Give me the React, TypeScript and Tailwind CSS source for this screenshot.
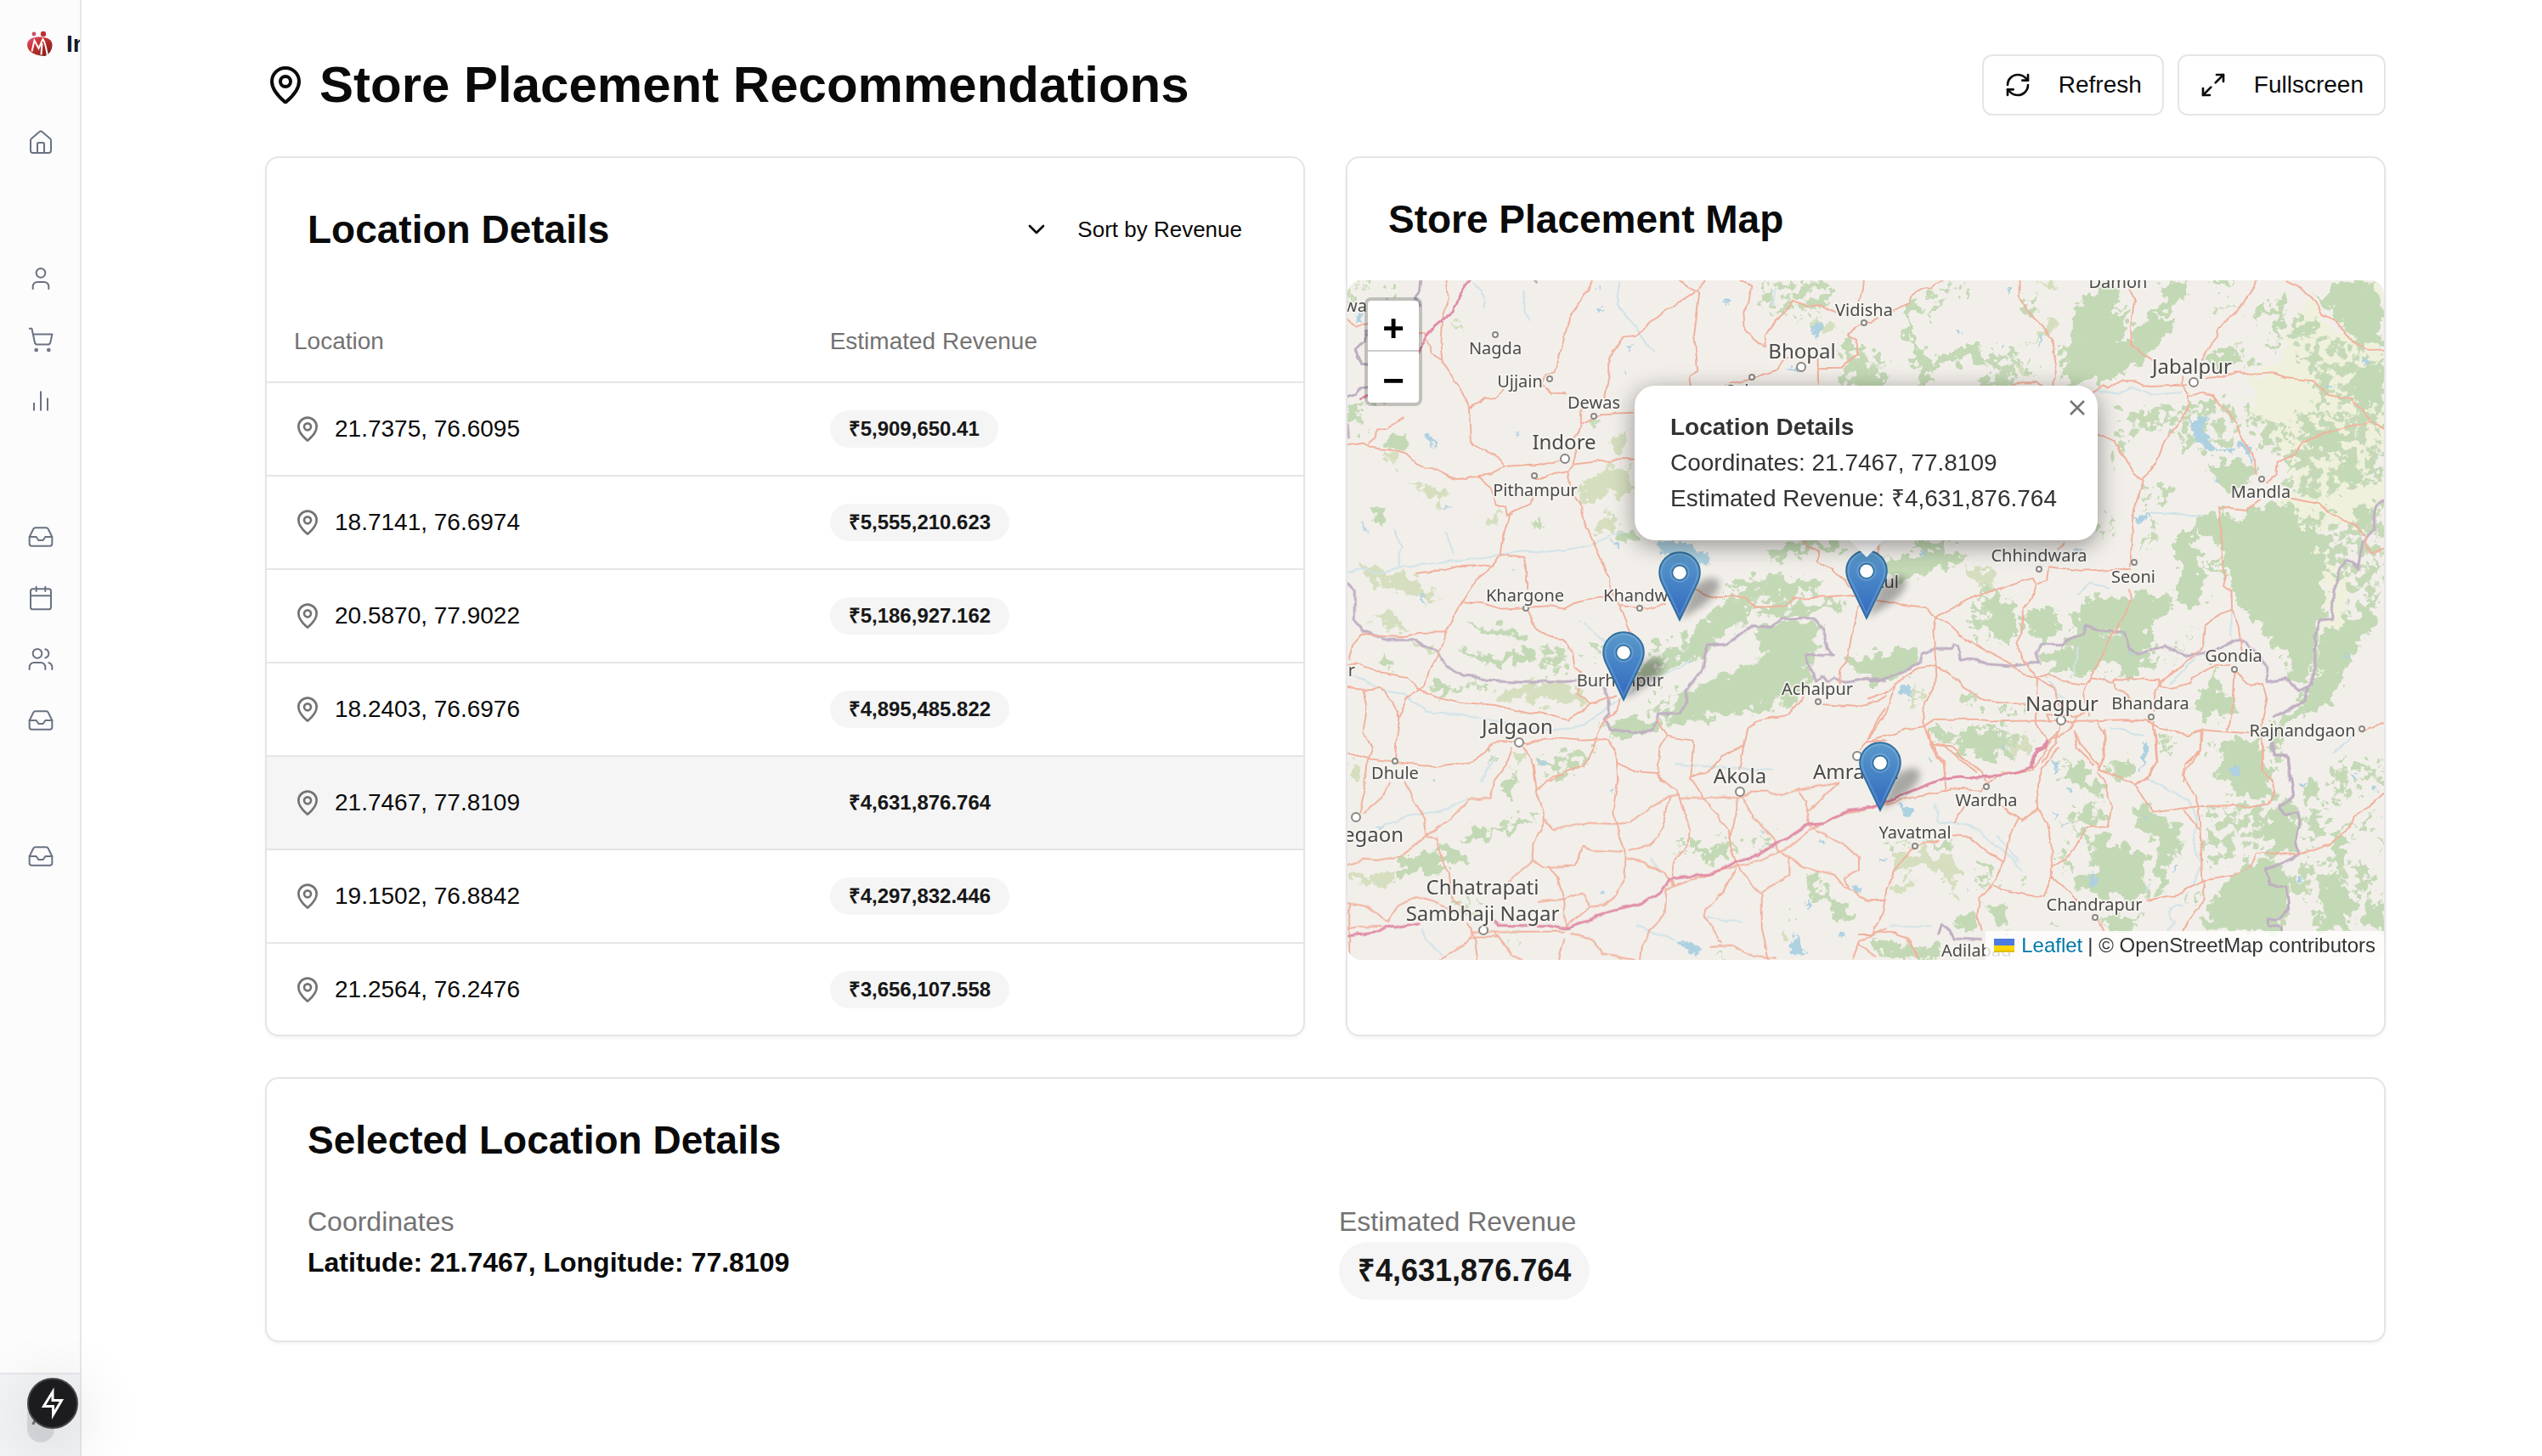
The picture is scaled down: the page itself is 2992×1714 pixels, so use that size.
import React from "react";
import {
  Calendar,
  ChevronDown,
  House,
  Inbox,
  MapPin,
  Maximize2,
  RefreshCw,
  ShoppingCart,
  User,
  Users,
} from "lucide-react";

type Sheet = {
  transform: string;
  meadow?: string;
  forest: string;
  scrub: string;
  light: string;
  water: string;
  rivers: string;
  roads: string;
  motorways: string;
  borders: string;
};

const SHEETS: Sheet[] = [
  {
    transform: "translate(-6 -290) scale(0.408 0.3333)",
    forest: "M1450 1140L1500 1150 1530 1210 1568 1200 1568 1250 1470 1250 1480 1200ZM1440 1085L1475 1090 1480 1120 1450 1130Z",
    scrub: "M1205 900L1300 880 1400 870 1410 950 1340 1000 1210 970ZM1430 1120L1568 1150 1568 1250 1450 1250ZM15 870L80 870 60 930 20 950ZM130 870L160 870 150 940 130 930ZM80 1300L130 1300 130 1320 80 1320Z",
    light: "M1370 1010L1430 1020 1440 1060 1400 1040 1360 1060ZM310 1010L335 1020 330 1050ZM1350 950L1390 960 1380 1000Z",
    water: "M1360 1010L1390 1025 1370 1080 1350 1045ZM735 965L755 975 740 985ZM820 1090L838 1105 828 1115ZM1100 935L1115 935 1108 955ZM1275 1180L1315 1175 1310 1195ZM40 990L60 985 55 1025 38 1020ZM810 1180L822 1200 815 1205ZM740 890L746 900 738 905Z",
    rivers: "M380 880L410 930 405 970M520 910L525 980 540 1010M800 880L790 950 830 1010 870 1080 900 1120M1250 900L1240 960",
    roads: "M300 870L306 930 287 1015 283 1090 288 1155 325 1220 345 1265 367 1320M718 870L715 890 695 930 655 1000 635 1100 612 1195 585 1200 575 1240 600 1268 645 1270M1048 870L1020 908 925 985 905 1005 845 1065 810 1070 770 1145 770 1200 757 1290M975 870L1015 908 1030 915 1015 1060 1025 1190 1003 1210 1007 1240M1150 870L1180 890 1172 950 1155 985 1158 1030 1185 1080 1225 1108M1502 870L1500 905 1488 945M1225 1108L1222 1070 1250 1010 1275 985 1300 942 1340 960 1380 958 1420 985M1285 1140L1255 1185 1160 1225 1105 1240M1374 1145L1375 1240M1374 1180L1440 1178 1485 1130 1485 1080 1458 1060 1490 1030 1525 1020M367 1320L400 1300 415 1285 445 1280 465 1255M220 1055L240 1060 258 1130 285 1150M15 1005L40 1035 70 1020",
    motorways: "M368 870L345 910 318 980 265 1035 245 1070 220 1125M72 1280L55 1286",
    borders: "M225 870L222 910 210 930 222 960M70 1045L65 1080 40 1110 40 1140 55 1165 72 1168M15 1280L40 1270 50 1250 72 1248M555 870L560 880",
  },
  {
    transform: "translate(614 -290) scale(0.408 0.3333)",
    meadow: "M1245 980L1260 935 1300 1000 1400 1090 1485 1120 1485 1320 1100 1320 1110 1220 1190 1150 1210 1050ZM1430 870L1485 870 1485 960Z",
    forest: "M590 960L640 920 650 900 700 900 730 940 700 1000 760 960 740 1060 700 1110 630 1080 570 1110ZM560 1100L620 1080 780 1090 800 1150 700 1225 560 1245ZM765 1020L850 950 840 880 910 870 930 920 870 960 830 1000 890 1020 860 1080 800 1130 760 1080ZM115 930L140 925 115 1020 130 1100 190 1160 175 1243 140 1243 150 1180 100 1080ZM180 1150L250 1110 310 1090 330 1180 280 1150 190 1170ZM1090 990L1200 930 1195 1070 1170 1070 1165 980 1110 1015ZM1305 930L1350 880 1410 870 1450 900 1485 960 1485 1110 1420 1100 1350 1010ZM1405 1190L1485 1130 1485 1320 1430 1320 1390 1230ZM980 1140L1040 1110 1080 1150 1000 1185ZM985 870L1060 870 1040 895 985 890ZM300 1230L420 1190 400 1243 300 1243ZM960 1300L1010 1285 1000 1320 950 1320ZM1215 1010L1290 1010 1300 1060 1230 1060Z",
    scrub: "M190 890L235 875 200 960 170 1010 160 960ZM0 1100L40 1120 30 1230 0 1240ZM330 1120L430 1130 480 1200 380 1240ZM440 960L510 890 480 990ZM1150 1080L1190 1070 1170 1130ZM260 900L290 900 280 950ZM1230 1060L1400 1080 1485 1200 1485 1320 1300 1320 1280 1260ZM990 960L1060 940 1000 1000ZM1050 1120L1130 1160 1110 1190Z",
    light: "M480 870L545 870 500 910ZM510 1000L550 1000 520 1060 440 1110 500 1050ZM1060 1090L1085 1100 1070 1125ZM420 1170L460 1180 450 1215Z",
    water: "M1420 1140L1437 1150 1430 1175ZM395 900L410 900 400 925ZM490 1070L498 1070 495 1120ZM245 1045L262 1045 255 1060ZM1010 915L1018 918 1008 928ZM1320 1235L1338 1245 1325 1260ZM380 1090L390 1095 380 1105Z",
    rivers: "M660 1260L720 1270 760 1245 820 1275 900 1265",
    roads: "M215 870L195 880 180 898 150 900 120 925 118 950 70 975M25 1000L5 1020M433 870L433 925 460 985 510 1045 532 1095 533 1130 540 1175 532 1243M750 900L765 935 755 1030 757 1095 780 1120 815 1150M1115 870L1110 900 1070 965 1010 1035 1007 1070 985 1100 960 1155M1205 870L1245 895 1285 945 1305 990 1345 1010 1365 1045 1395 1085 1440 1115 1485 1115M970 1215L1030 1210 1070 1195 1120 1202 1160 1198 1200 1215 1280 1225 1325 1275 1390 1290 1415 1320M920 1240L810 1245 770 1225 725 1225 690 1250 680 1240 645 1265M905 1210L905 1240 922 1270 920 1320M925 1280L960 1265 990 1275 1020 1320M412 1243L440 1228 480 1228 500 1243",
    motorways: "",
    borders: "",
  },
  {
    transform: "translate(-6 150) scale(0.408 0.3333)",
    forest: "M990 790L1070 730 1110 680 1180 690 1160 760 1060 840 1050 870 990 850ZM870 890L950 870 1040 850 1030 890 950 910 880 940ZM980 1000L1110 940 1160 920 1230 860 1170 790 1280 755 1370 770 1370 860 1340 900 1350 960 1290 1050 1200 1060 1000 1110 920 1110 960 1040ZM1100 620L1220 600 1380 595 1390 640 1290 665 1200 660ZM1190 690L1300 700 1460 680 1440 710 1320 730 1220 730ZM350 760L420 770 510 790 510 825 430 810ZM330 850L420 878 560 860 570 895 400 908ZM240 970L320 970 310 1010 260 1005ZM750 1120L840 1100 910 1090 900 1150 790 1155ZM1225 530L1300 475 1440 480 1440 510 1370 500 1250 545ZM1450 880L1568 885 1568 930 1480 940ZM85 350L130 350 120 425 90 400ZM560 370L576 370 568 430 560 400ZM140 75L180 80 175 145 120 130ZM800 430L840 430 840 475 800 470ZM95 885L140 875 140 910 110 910ZM20 20L50 10 40 50 20 60ZM720 50L740 50 730 80Z",
    scrub: "M580 830L640 850 650 930 560 950ZM860 920L930 910 900 980 850 960ZM1110 650L1300 620 1300 700 1120 700ZM900 800L1000 850 900 890ZM340 960L420 970 400 1000 340 990ZM880 1030L960 1030 920 1080ZM730 850L780 840 760 880 670 860ZM560 1240L700 1250 620 1320ZM410 1200L440 1220 430 1280ZM15 0L60 0 60 60 20 70ZM480 1280L520 1280 500 1320Z",
    light: "M680 290L730 240 830 190 840 290 760 320 700 340ZM740 370L790 370 780 450 728 430ZM200 260L290 290 290 340 220 290ZM60 560L200 600 290 680 180 660 70 610ZM80 740L160 730 200 790 150 780ZM440 1000L570 965 680 1000 680 1040 450 1030ZM120 160L160 170 150 210 130 200ZM410 370L460 380 440 420 415 410ZM770 100L830 80 800 160 770 150ZM190 820L270 850 240 870Z M15 1260L60 1270 60 1310 20 1300Z",
    water: "M905 475L1015 475 1015 508 1060 515 1058 555 1020 545 950 520 920 510ZM235 100L250 85 262 110 275 135 262 138 250 115ZM500 88L510 90 505 105ZM295 350L318 345 300 368ZM50 400L68 430 62 432ZM220 655L235 660 238 700ZM565 1245L585 1240 575 1268ZM770 470L800 480 800 500ZM490 570L498 575 492 583ZM685 750L692 755 688 762Z",
    rivers: "M15 580L60 570 110 585 180 560 350 540 450 520 530 505 600 510 700 490 760 460 810 435M15 940L60 960 120 1000 180 1010 240 1070 340 1085 460 1110 600 1140 700 1120 760 1060 870 980 960 920 1010 890M150 430L170 490 160 560M300 440L320 520M60 400L75 440M700 760L760 830M1060 300L1100 350",
    roads: "M15 130L60 122 80 140 155 152 185 165 215 200 260 215 300 240 355 255 390 240 430 235 470 208 540 200 560 205 610 192 640 180M75 125L95 105 98 80 130 75 175 38M365 0L370 120 395 145 440 165 470 208M690 0L688 50 690 70 668 105 675 150 665 200 650 225 610 235 590 245 555 250M690 60L745 25 840 20M665 200L770 185 840 182M650 228L662 300 690 350 690 385 720 460 740 520 770 605 770 630 800 700 835 800M547 315L540 340 485 370 475 420 462 455 455 520 430 565 385 610 345 685 320 740 300 790 285 840 275 880 248 930 235 985 185 1025 165 1100 155 1180 152 1245M390 240L430 280 440 340 468 350 472 380 490 375M455 518L490 525 525 530 532 560 532 640M210 585L300 572 340 558 385 556 425 562M345 685L400 690 460 710 600 700 640 710 670 690 740 668 770 668M535 720L555 775 605 815 640 820 665 870 670 920 690 940 680 1010 715 1045 745 1035 790 1015M300 793L220 795 170 810 85 805 55 800 30 835 20 890M15 905L50 905 100 935 190 955 215 990 270 1020 340 1040 440 1050 540 1080 570 1075 650 1100 690 1070 715 1045M15 990L60 995 110 990 145 1040 165 1100M60 995L70 1060 60 1150 85 1200 70 1250 65 1320M805 700L880 710 930 695M1020 645L1070 668 1160 670 1190 705 1280 700 1300 675 1400 670 1480 662M1330 470L1345 495 1370 500 1370 545 1415 570 1450 610 1465 640M1490 700L1475 770 1455 900 1440 920 1435 985M15 1220L75 1240 155 1250 260 1270 370 1255 410 1220 435 1180 490 1180 530 1190 590 1165 690 1175 765 1170 790 1215 795 1320M800 1030L795 1070 760 1100 735 1150 725 1200 700 1260 640 1290 600 1320M490 1205L470 1260 435 1320M520 1200L545 1240 555 1320M905 1100L935 1160 915 1200 910 1295M935 1160L1010 1175 1015 1190 1005 1310M795 1255L850 1285 905 1290 930 1320M1330 1025L1290 1085 1210 1100 1170 1135 1155 1210 1145 1280M1155 1195L1100 1225 1060 1280 1010 1305M1385 1048L1480 1055 1540 1040 1568 1020M1568 1060L1510 1180 1490 1210M1510 1180L1568 1178M1547 475L1545 500",
    motorways: "",
    borders: "M15 620L35 645 35 750 60 790 130 820 200 820 275 860 300 915 350 945 390 950 420 965 530 970 680 962M755 990L770 1040 770 1080 755 1100 775 1135 860 1150 895 1135 915 1080 970 1078 995 1040 990 1000 1040 920 1045 880 1055 840 1105 835 1180 770 1240 775 1270 745 1360 742 1385 780 1400 850 1415 870 1390 875 1340 870 1345 910 1370 970 1385 945 1400 970 1420 955 1450 970 1480 965 1510 955 1568 965M15 60L18 105",
  },
  {
    transform: "translate(614 150) scale(0.408 0.3333)",
    meadow: "M1080 0L1485 0 1485 120 1450 170 1450 220 1485 270 1485 330 1440 450 1340 400 1290 440 1350 560 1380 620 1370 780 1310 770 1330 640 1290 560 1270 440 1180 330 1230 300 1220 200 1150 100ZM1070 450L1130 450 1140 490 1110 520 1070 490Z",
    forest: "M985 370L1030 370 1040 395 1100 370 1150 340 1220 345 1260 400 1290 440 1300 520 1330 570 1300 620 1325 680 1290 760 1290 850 1300 900 1250 985 1215 960 1210 900 1150 830 1130 760 1080 720 1040 640 1030 560 1010 480 960 440ZM870 490L950 390 1000 370 1005 410 950 440 940 520 965 600 965 690 890 695 890 530ZM965 560L1010 520 1020 590ZM460 720L540 700 550 790 500 825 440 760ZM580 740L640 660 720 680 780 650 880 680 870 720 800 760 820 840 760 860 720 790 610 800ZM490 870L560 840 620 790 730 800 780 870 840 870 830 900 740 950 700 900 590 945 510 910ZM1400 760L1475 620 1460 760 1400 860 1370 930 1340 1060 1270 1070 1230 1110 1170 1110 1250 1040 1300 900 1300 790ZM0 880L130 850 150 900 60 960 0 960ZM0 560L150 510 290 515 230 560 120 600 60 610ZM930 1060L1000 930 1020 1010 1060 1040 1030 1090 970 1090ZM1020 1180L1130 1160 1150 1300 1010 1320ZM1060 310L1010 270 980 200 1060 180 1120 240ZM330 690L420 670 430 800 370 820ZM1390 350L1450 340 1450 440 1400 400ZM180 1110L210 1120 220 1170 180 1160ZM1370 180L1410 170 1400 260 1370 240ZM120 480L230 475 220 520 150 510ZM1240 110L1320 60 1400 100 1330 170ZM250 1140L370 1130 410 1210 330 1240 260 1190ZM560 1260L630 1270 620 1320 560 1320ZM690 1250L760 1240 750 1320Z",
    scrub: "M740 0L900 0 880 80 760 90 700 210 670 200 720 120ZM880 0L1080 0 1040 130 900 150ZM1220 20L1480 0 1480 250 1300 330 1200 300ZM1090 20L1200 60 1200 160 1120 130ZM1250 360L1400 420 1480 340 1480 640 1400 640 1300 560ZM1380 560L1480 500 1460 640 1390 760ZM690 380L720 380 680 470 670 430ZM760 300L880 270 860 330 780 330ZM830 390L830 470 780 500ZM320 620L400 660 350 820 290 780ZM850 890L950 770 890 860ZM1150 1140L1200 1120 1200 1260 1150 1240ZM820 1160L890 1180 850 1230ZM260 990L310 1000 310 1060 270 1040ZM370 1050L450 1080 400 1110ZM1370 640L1430 720 1430 820 1380 800ZM980 0L1080 20 1060 110ZM1340 1250L1485 1260 1485 1320 1340 1320Z",
    light: "M260 560L360 570 370 620 300 650 320 610ZM130 980L160 1000 140 1050ZM400 1180L460 1150 470 1200 420 1240Z",
    water: "M925 45L980 30 965 80 1000 150 1060 140 1070 110 1100 140 1110 210 1090 150 1060 130 1050 158 980 150 940 110ZM760 385L810 375 800 395 780 410ZM150 510L165 510 155 540ZM90 980L125 975 120 1030 90 1010ZM750 850L760 860 755 890ZM590 500L615 505 600 515ZM990 240L1015 265 1005 265ZM1370 870L1380 875 1375 890ZM160 1235L190 1245 180 1255ZM380 1200L395 1190 385 1215ZM1040 1270L1070 1265 1050 1305ZM1390 1290L1405 1290 1400 1320ZM790 1180L812 1190 800 1240 780 1290 790 1230ZM1220 290L1232 295 1225 305ZM615 770L627 770 620 790ZM680 950L690 955 682 962Z",
    rivers: "M970 830L930 900 870 970M1045 720L1045 800M790 1160L740 1140 700 1130M600 660L640 620 690 640M800 370L880 375 960 380M1400 1150L1340 1220M600 850L590 940M520 970L560 1030",
    roads: "M920 0L890 60 850 120 830 190 790 250 780 300 765 360 760 430 755 520 755 560M750 640L755 680 740 730 700 800 670 880 635 960 620 1000 622 1035 635 1090M660 95L705 120 745 180 750 215 790 260M1025 0L1060 60 1075 110 1105 160 1120 230M1145 265L1175 240 1178 190 1230 160 1250 125 1310 90 1445 52 1485 75M1420 0L1445 45M1215 320L1300 340 1330 370 1400 415 1430 450 1435 495 1450 518 1485 495M1130 325L1090 360 1010 350 1018 470 1020 560 1028 600 1022 630 1045 650 1047 710 1065 770 1075 860M1047 710L1010 725 970 770 965 840 925 890 835 975 825 1000 822 1070M755 570L700 570 610 575 520 562 515 610 480 628 470 602 395 630 300 670 190 738 185 790 193 910 195 960 160 1040 155 1110 175 1180 215 1250 222 1310M565 473L545 500M480 628L470 670 445 710 447 780 425 830 440 880 485 960 480 1110M25 680L80 692 160 705 190 738 225 760 260 800 340 860 410 905 440 940 490 960 540 1000 550 1070M0 1030L60 1000 100 950 140 920 193 910 230 935 270 985 335 1035 400 1040 450 1050M75 990L50 1080 0 1165M0 1180L110 1135 160 1125 195 1100 310 1100 370 1108 480 1105 550 1108 650 1105 740 1102 800 1105 840 1130 920 1155 960 1138 1095 1150M480 955L520 940 560 965 630 975 640 955 700 968 710 958 835 960 840 985 870 990 930 972 930 955 980 920 1040 908M705 965L710 990 735 1000 760 1040M1055 930L1050 1060 1035 1140M1060 935L1100 980 1135 975 1148 1030 1135 1100 1133 1150 1133 1280M960 1145L955 1215 910 1280 905 1320M820 1110L830 1250 805 1310M660 1108L680 1160 680 1220 662 1280M600 1090L575 1140 520 1175M480 1110L500 1150 515 1170M590 1140L600 1200 650 1260M550 1120L540 1180 500 1250M175 1190L220 1195 270 1250 310 1290M1425 1142L1455 1130 1485 1112M28 475L28 520M520 1110L510 1080 600 1090 640 1070",
    motorways: "M518 1180L510 1200 480 1215 470 1270",
    borders: "M0 962L30 965 100 930 150 895 155 870 190 850 235 850 245 835 260 840 265 895 305 885 340 905 410 912 490 900 480 865 500 835 560 835 600 805 620 800 625 768 660 785 735 790 750 850 780 870 850 840 920 880 1010 850 1050 820 1090 830 1145 910 1150 965 1200 955 1240 1000 1265 985M1485 325L1460 350 1460 430 1425 470 1415 530 1410 570 1395 545 1375 535 1360 570 1340 650 1335 745 1300 750 1285 800 1290 920 1265 990 1260 1030 1220 1060 1170 1090M1165 1180L1170 1225 1210 1235 1212 1320",
  },
  {
    transform: "translate(-6 530) scale(0.408 0.3333)",
    forest: "M150 490L180 450 260 430 320 415 350 420 370 480 330 475 300 455 270 470 290 500 260 510 230 480 160 520ZM340 390L380 350 450 350 510 295 570 310 520 330 470 350 420 370 350 400ZM990 420L1040 400 1060 430 1100 380 1110 420 1080 490 1050 450ZM1330 510L1370 515 1380 560 1410 600 1430 600 1470 640 1435 668 1400 620 1370 600 1330 550ZM445 220L480 170 510 150 480 230ZM1540 740L1568 730 1568 780 1540 770ZM1090 800L1115 800 1115 809 1090 809Z",
    scrub: "M1090 370L1140 380 1130 430 1100 420ZM1160 390L1245 370 1240 420 1180 410ZM300 590L400 600 420 650 340 640ZM600 80L740 60 700 120 620 130ZM950 420L1020 410 1040 450ZM1290 660L1320 650 1310 670Z",
    light: "M20 500L60 490 90 515 140 500 150 530 130 570 90 540 30 540ZM500 80L525 80 520 125 502 120ZM1265 710L1290 700 1280 740ZM500 720L525 720 510 740Z",
    water: "M965 745L1000 745 1040 770 1020 800 990 770ZM1290 770L1310 710 1325 760 1340 790 1300 795ZM745 550L765 580 750 585ZM1465 540L1498 555 1485 572ZM1340 605L1350 605 1346 635ZM90 340L120 335 110 350ZM570 95L590 105 575 125ZM1205 350L1215 355 1213 375ZM1435 715L1450 720 1438 740ZM1375 390L1395 388 1385 400ZM775 205L783 205 780 225ZM260 178L272 182 264 192ZM335 770L340 775 335 783ZM475 738L482 742 478 748Z",
    rivers: "M110 340L180 305 290 280 360 240M440 90L400 180M890 450L920 500M1050 660L1150 680M230 700L240 740 290 790M850 690L960 740M960 120L1240 140",
    roads: "M180 185L205 250 235 310 245 375 270 380 285 450 308 500 315 590 360 640M135 185L110 240 60 295M70 180L50 290M435 180L430 238 365 245 300 325 245 370 165 445 100 458 60 455 15 475M550 120L560 210 580 300 580 330 550 400 548 460 580 482 670 478 695 410 720 422 805 428M830 425L890 400 915 370 945 235M560 210L610 160 640 155M585 315L610 352 690 325 780 330 830 325 870 290 940 235 965 230M795 170L780 290 800 370 815 430 812 530 790 580 750 615 715 620M820 450L870 465 930 505 955 550 935 560 930 650 890 700 865 760 860 809M910 155L965 210 970 240 1050 240 1100 235 1145 238 1180 215 1225 215 1270 228 1310 210 1430 185M1005 170L1040 235 1075 290 1115 355 1120 410 1135 465 1155 500 1185 550 1210 580 1210 700 1230 809M1140 240L1130 330 1115 380M1155 240L1190 310 1245 380 1255 420 1330 480 1420 510 1450 555 1520 600 1568 595M970 240L1005 350 990 420 960 450 950 530 955 550 1000 530 1140 480 1200 460 1290 410 1350 350 1450 290 1540 270M1315 215L1335 250 1350 340 1445 400 1490 450 1490 490 1450 520 1460 555M1430 185L1385 240 1345 285M1290 450L1290 510 1210 570M1135 490L1100 570 1050 630 1045 655 1095 750M1060 765L1120 758 1185 795 1250 803M548 460L480 530M600 485L620 520 640 600 645 700M15 610L70 620 130 675 160 620 215 585 260 600 315 640 350 660M360 680L375 720 345 760 285 809M380 720L390 809M375 712L440 712 540 710 640 710M370 730L445 730M440 715L490 795 520 809M660 715L720 740 750 790 840 809M640 735L625 809M645 690L715 620 690 575 640 595 565 605M15 700L60 690 110 690M20 610L20 809M1470 809L1490 745 1540 715 1568 700M1490 755L1535 795",
    motorways: "M15 723L100 710 125 693 150 695 220 680M440 675L450 688 590 688 625 698 655 697 680 680 720 670 760 640 830 620 880 602 920 570 945 525 1065 505 1100 490 1135 465 1195 443 1250 400 1280 385 1345 333 1390 328 1460 280 1530 270 1568 250",
    borders: "",
  },
  {
    transform: "translate(614 530) scale(0.408 0.3333)",
    forest: "M620 370L670 360 700 400 740 390 790 450 805 595 670 590 640 570 590 560 590 530 650 500 640 440ZM760 280L800 250 830 300 860 330 900 340 900 400 860 480 860 570 830 560 820 470 830 380 760 340ZM1020 50L1110 20 1140 60 1130 120 1170 180 1150 250 1100 230 1030 200 1040 150ZM1150 300L1200 240 1240 280 1240 430 1150 430ZM980 620L1050 510 1160 440 1200 500 1210 640 1190 708 970 708ZM1290 640L1340 500 1370 560 1400 640 1380 708 1280 708ZM590 280L660 260 675 310 600 330ZM555 130L620 170 680 190 675 235 600 190ZM240 660L300 660 300 715 250 690ZM330 600L380 610 405 650 400 708 345 640ZM20 730L90 760 200 770 190 809 100 809 30 780ZM670 660L790 660 740 708 680 700ZM1130 450L1180 440 1180 480ZM160 390L260 400 240 420 180 410ZM290 440L370 500 360 520 300 470ZM1350 130L1370 130 1380 230 1340 210ZM1250 200L1300 180 1300 240 1250 260ZM1460 370L1485 370 1485 430ZM560 430L580 500 560 500ZM520 670L545 680 540 698 525 690ZM1350 350L1380 330 1370 480 1330 490ZM1420 510L1460 520 1440 570 1410 560ZM1430 610L1485 600 1485 708 1420 680ZM700 110L760 110 750 170 700 160ZM450 520L465 525 460 545Z",
    scrub: "M980 270L1200 260 1150 340 1140 420 980 480ZM1230 300L1340 280 1290 400 1240 380ZM1240 450L1380 470 1330 620 1200 560ZM960 30L1010 60 980 80ZM160 0L460 10 400 80 230 60ZM300 520L380 520 360 560 300 550ZM1350 470L1450 480 1430 620 1370 560ZM910 570L960 560 950 620 920 620ZM1330 120L1410 220 1350 260ZM560 330L640 330 600 370ZM1380 350L1460 300 1440 360ZM540 420L580 440 570 500ZM40 370L140 380 100 410 60 400ZM820 0L880 30 860 90 830 50Z",
    light: "M70 440L140 430 240 450 265 500 245 510 260 580 240 580 220 500 180 490 80 480ZM70 550L120 540 100 580 70 570ZM100 500L125 510 115 530ZM400 30L460 50 470 80 410 80Z",
    water: "M75 255L105 270 130 280 125 300 100 295 90 270ZM640 500L660 515 650 560 635 550ZM165 90L190 105 180 118ZM530 110L548 120 540 155 532 140ZM1040 130L1070 120 1060 160 1045 165ZM1393 150L1405 155 1400 185 1393 175ZM1240 185L1262 190 1245 205ZM530 290L548 298 535 310ZM565 325L580 325 570 335ZM30 450L45 450 35 465ZM880 470L890 470 888 505 882 495ZM1445 200L1470 200 1460 220ZM1232 520L1250 525 1243 545ZM790 305L805 305 795 315ZM280 555L288 555 284 570ZM570 205L590 210 575 215Z",
    rivers: "M810 170L860 210 920 240 945 300 935 400 960 470 930 550M905 620C860 600 850 650 885 680L860 708M190 260L200 320 280 330 310 350 340 380 420 460 440 490M370 370L430 460M800 570L810 540M60 690L180 690",
    roads: "M0 278L90 245 200 218 240 205 320 212 345 180 385 150 470 140 500 90 545 0M590 0L605 40 655 110 665 140 720 165 765 190 790 240 820 290 900 275 950 268 1030 265 1100 270 1150 260 1170 220 1165 185 1135 140 1133 0M825 0L832 110 800 170 765 192M955 0L955 70 910 120 905 160 940 230 950 270 955 350 960 490 965 600 915 680 905 708M905 275L955 355M180 50L240 55 270 95 325 150 340 175M170 0L175 50 215 120 222 210M545 60L500 130 485 200 488 275 440 320 430 310 405 370 390 460 355 550 320 590 312 650 325 708M488 275L512 330 525 400 527 510 505 590 430 575 355 550M527 480L580 440 610 380 625 345 690 340 700 265 685 230 685 190 660 150M527 510L560 550 600 600M800 600L885 580 960 530 1050 512 1100 480 1120 435 1160 430 1240 440 1330 400 1390 340 1400 300 1445 270 1485 220M275 265L245 325M240 370L290 375 340 430 390 465M385 270L430 310M200 390L150 400 115 425 75 500 50 560 40 640 10 720 -30 720M45 598L0 598M20 715L60 710 110 730 140 800M660 670L675 708M680 0L675 90 662 140",
    motorways: "M515 35L505 60 480 65 465 130 430 145 385 158 330 160 310 170 260 162 215 170 150 200 80 235 0 275",
    borders: "M1160 45L1170 85 1208 90 1215 150 1225 235 1180 270 1200 295 1240 285 1240 340 1230 400 1240 440 1200 465 1145 490 1155 540 1205 555 1210 630 1180 670 1150 665 1155 690 1190 695 1190 708M325 740L245 735 230 700 210 682 200 720",
  },
];

type Label = {
  name: string;
  x: number;
  y: number;
  big?: boolean;
  anchor?: "start" | "middle" | "end";
  dot?: [number, number];
};

const LABELS: Label[] = [
  { name: "wa", x: 23, y: 37, anchor: "end" },
  { name: "Nagda", x: 174, y: 87, dot: [174, 64] },
  { name: "Ujjain", x: 203, y: 126, dot: [238, 116] },
  { name: "Dewas", x: 290, y: 151, dot: [290, 160] },
  { name: "Bhopal", x: 535, y: 92, big: true, dot: [534, 102] },
  { name: "Sehore", x: 478, y: 137, dot: [476, 114] },
  { name: "Vidisha", x: 608, y: 42, dot: [608, 50] },
  { name: "Damoh", x: 907, y: 9 },
  { name: "Jabalpur", x: 994, y: 110, big: true, dot: [996, 120] },
  { name: "Indore", x: 255, y: 199, big: true, dot: [256, 210] },
  { name: "Pithampur", x: 221, y: 254, dot: [220, 230] },
  { name: "Khargone", x: 209, y: 378, dot: [210, 386] },
  { name: "Khandwa", x: 301, y: 378, anchor: "start", dot: [344, 386] },
  { name: "Burhanpur", x: 321, y: 478 },
  { name: "Jalgaon", x: 200, y: 534, big: true, dot: [202, 544] },
  { name: "Dhule", x: 56, y: 587, dot: [56, 566] },
  { name: "Akola", x: 462, y: 592, big: true, dot: [462, 602] },
  { name: "Amravati", x: 548, y: 587, big: true, anchor: "start", dot: [600, 560] },
  { name: "Achalpur", x: 553, y: 488, dot: [554, 496] },
  { name: "Betul", x: 649, y: 362, anchor: "end" },
  { name: "Chhindwara", x: 814, y: 331, dot: [814, 340] },
  { name: "Seoni", x: 925, y: 356, dot: [926, 332] },
  { name: "Mandla", x: 1075, y: 256, dot: [1076, 234] },
  { name: "Gondia", x: 1043, y: 449, dot: [1044, 458] },
  { name: "Nagpur", x: 841, y: 507, big: true, dot: [840, 518] },
  { name: "Bhandara", x: 945, y: 505, dot: [946, 514] },
  { name: "Rajnandgaon", x: 1124, y: 537, dot: [1194, 528] },
  { name: "Wardha", x: 752, y: 619, dot: [752, 596] },
  { name: "Yavatmal", x: 668, y: 657, dot: [668, 666] },
  { name: "Chandrapur", x: 879, y: 742, dot: [880, 750] },
  { name: "Adilabad", x: 699, y: 796, anchor: "start" },
  { name: "Malegaon", x: 66, y: 661, big: true, anchor: "end", dot: [10, 632] },
  { name: "ur", x: 9, y: 466, anchor: "end" },
  { name: "Chhatrapati", x: 159, y: 723, big: true },
  { name: "Sambhaji Nagar", x: 159, y: 754, big: true, dot: [160, 765] },
];

const PINS: [number, number][] = [
  [391, 401],
  [611, 399],
  [325, 495],
  [627, 625],
];

function Pin({ x, y }: { x: number; y: number }) {
  return (
    <g transform={`translate(${x - 25} ${y - 82}) scale(2)`}>
      <path d="M13 40L20 22C24 17 32 14 35 17C38 20 33 27 26 32Z" fill="#000" opacity="0.3" filter="url(#pinShadow)" />
      <path
        d="M12.5 .6C5.9 .6 .6 5.9 .6 12.5c0 2.3 .7 4.600 1.900 7L12.500 40.300 22.500 19.500c1.200-2.400 1.900-4.700 1.900-7C24.400 5.900 19.100 .6 12.500 .6z"
        fill="url(#pinFill)"
        stroke="#2f6f9f"
        strokeWidth="1"
      />
      <path
        d="M12.500 1.700C6.500 1.700 1.700 6.500 1.700 12.500c0 2.100 .6 4.200 1.800 6.500L12.500 37.800 21.500 19c1.200-2.300 1.800-4.400 1.800-6.500C23.300 6.500 18.500 1.700 12.500 1.700z"
        fill="none"
        stroke="#fff"
        strokeOpacity="0.15"
        strokeWidth="1.100"
      />
      <circle cx="12.500" cy="12.600" r="5.300" fill="none" stroke="#fff" strokeOpacity="0.15" />
      <circle cx="12.500" cy="12.600" r="4.300" fill="#fff" stroke="#2f6f9f" strokeWidth="0.800" />
    </g>
  );
}

type LineKey = "rivers" | "roads" | "motorways" | "borders";

function Lines({ layer, color, width }: { layer: LineKey; color: string; width: number }) {
  return (
    <g fill="none" stroke={color} strokeLinejoin="round" strokeLinecap="round">
      {SHEETS.map((s) => (
        <path key={s.transform} transform={s.transform} d={s[layer]} strokeWidth={width} vectorEffect="non-scaling-stroke" />
      ))}
    </g>
  );
}

type AreaKey = "meadow" | "forest" | "scrub" | "light" | "water";

function Areas({ layer, color, filter }: { layer: AreaKey; color: string; filter: string }) {
  return (
    <g fill={color} filter={filter}>
      {SHEETS.map((s) => (
        <path key={s.transform} transform={s.transform} d={s[layer] ?? ""} />
      ))}
    </g>
  );
}

function MapDrawing() {
  return (
    <svg className="block h-full w-full" viewBox="0 0 1220 800" preserveAspectRatio="xMidYMid slice" role="img" aria-label="Map of central India">
      <defs>
        <linearGradient id="pinFill" x1="0" y1="0" x2="0" y2="1">
          <stop offset="0" stopColor="#5a9acb" />
          <stop offset="1" stopColor="#3068c0" />
        </linearGradient>
        <filter id="pinShadow" x="-40%" y="-40%" width="180%" height="180%">
          <feGaussianBlur stdDeviation="2.200" />
        </filter>
        <filter id="ragged" filterUnits="userSpaceOnUse" x="0" y="0" width="1220" height="800">
          <feTurbulence type="fractalNoise" baseFrequency="0.07" numOctaves="4" seed="4" result="n" />
          <feDisplacementMap in="SourceGraphic" in2="n" scale="34" xChannelSelector="R" yChannelSelector="G" />
        </filter>
        <filter id="speckle" filterUnits="userSpaceOnUse" x="0" y="0" width="1220" height="800">
          <feTurbulence type="fractalNoise" baseFrequency="0.09" numOctaves="3" seed="9" result="n" />
          <feColorMatrix in="n" type="matrix" values="0 0 0 0 0  0 0 0 0 0  0 0 0 0 0  0 14 0 0 -6.300" result="m" />
          <feDisplacementMap in="SourceGraphic" in2="n" scale="40" xChannelSelector="R" yChannelSelector="B" result="d" />
          <feComposite in="d" in2="m" operator="in" />
        </filter>
        <filter id="shore" filterUnits="userSpaceOnUse" x="0" y="0" width="1220" height="800">
          <feTurbulence type="fractalNoise" baseFrequency="0.15" numOctaves="3" seed="2" result="n" />
          <feDisplacementMap in="SourceGraphic" in2="n" scale="12" xChannelSelector="R" yChannelSelector="G" />
        </filter>
        <filter id="wiggle" filterUnits="userSpaceOnUse" x="0" y="0" width="1220" height="800">
          <feTurbulence type="fractalNoise" baseFrequency="0.06" numOctaves="2" seed="7" result="n" />
          <feDisplacementMap in="SourceGraphic" in2="n" scale="6" xChannelSelector="R" yChannelSelector="G" />
        </filter>
      </defs>
      <rect width="1220" height="800" fill="#f2efea" />
      <Areas layer="meadow" color="#eff1dc" filter="url(#ragged)" />
      <Areas layer="light" color="#d5dfbf" filter="url(#ragged)" />
      <Areas layer="scrub" color="#c5d9b7" filter="url(#speckle)" />
      <Areas layer="forest" color="#c3d9b5" filter="url(#ragged)" />
      <g filter="url(#wiggle)">
        <Lines layer="rivers" color="#cfe2e8" width={2} />
      </g>
      <Areas layer="water" color="#aed1e1" filter="url(#shore)" />
      <g filter="url(#wiggle)">
        <Lines layer="borders" color="#bfaec2" width={3} />
        <Lines layer="roads" color="#f1b29e" width={2} />
        <Lines layer="motorways" color="#e08da6" width={3} />
      </g>
      {LABELS.map(({ dot, name, big }) =>
        dot ? (
          <circle key={name} cx={dot[0]} cy={dot[1]} r={big ? 5 : 3} fill="#fff" stroke="#8a8782" strokeWidth="2" />
        ) : null
      )}
      <g fontFamily="'Noto Sans', sans-serif" fill="#4a4a4a" stroke="#f7f5f1" strokeWidth="4" strokeLinejoin="round" strokeOpacity="0.800" paintOrder="stroke">
        {LABELS.map(({ name, x, y, big, anchor }) => (
          <text key={name} x={x} y={y} fontSize={big ? 24 : 20} textAnchor={anchor ?? "middle"}>
            {name}
          </text>
        ))}
      </g>
      {PINS.map(([x, y]) => (
        <Pin key={x} x={x} y={y} />
      ))}
    </svg>
  );
}

function StoreMap() {
  return (
    <div className="relative h-[800px] overflow-hidden rounded-2xl">
      <MapDrawing />
      <div className="absolute left-5 top-5 flex flex-col overflow-hidden rounded-lg border-4 border-black/20 bg-white bg-clip-padding text-[44px] font-bold text-black">
        <button type="button" aria-label="Zoom in" className="h-[60px] w-[60px] border-b-2 border-[#ccc] pt-2 leading-[50px]">
          +
        </button>
        <button type="button" aria-label="Zoom out" className="h-[60px] w-[60px] pt-2 leading-[50px]">
          −
        </button>
      </div>
      <div className="absolute left-[338px] top-[124px] w-[545px]">
        <div className="relative rounded-3xl bg-white py-7 pl-[42px] pr-6 text-[28px] leading-[42px] text-[#333] shadow-[0_6px_28px_rgba(0,0,0,0.4)]">
          <h3 className="font-bold">Location Details</h3>
          <p>Coordinates: 21.7467, 77.8109</p>
          <p className="whitespace-nowrap">Estimated Revenue: ₹4,631,876.764</p>
          <button type="button" aria-label="Close popup" className="absolute right-0 top-0 flex h-12 w-12 items-center justify-center pt-1 text-[#757575]">
            <svg className="h-5 w-5" viewBox="0 0 20 20" stroke="currentColor" strokeWidth="2.500">
              <path d="M2 2L18 18M18 2L2 18" />
            </svg>
          </button>
        </div>
        <svg className="mx-auto block h-5 w-10" viewBox="0 0 40 20">
          <path d="M0 0L20 20L40 0Z" fill="#fff" />
        </svg>
      </div>
      <div className="absolute bottom-0 right-0 flex h-[34px] items-center gap-[6px] bg-white/80 px-[10px] text-2xl text-[#333]">
        <a href="#leaflet" className="flex items-center gap-2 text-[#0078a8]">
          <svg className="h-4 w-6" viewBox="0 0 12 8">
            <path fill="#4c7be1" d="M0 0h12v4H0z" />
            <path fill="#ffd500" d="M0 4h12v3H0z" />
            <path fill="#e0bc00" d="M0 7h12v1H0z" />
          </svg>
          Leaflet
        </a>
        <span>| © OpenStreetMap contributors</span>
      </div>
    </div>
  );
}

function BarsIcon() {
  return (
    <svg className="h-8 w-8" viewBox="0 0 24 24" fill="none" stroke="currentColor" strokeWidth="1.500" strokeLinecap="round">
      <path d="M18 20V10M12 20V4M6 20v-6" />
    </svg>
  );
}

const iconClass = "h-8 w-8";

const NAV: { label: string; icon: React.ReactNode }[][] = [
  [{ label: "Home", icon: <House className={iconClass} strokeWidth={1.5} /> }],
  [
    { label: "Customers", icon: <User className={iconClass} strokeWidth={1.5} /> },
    { label: "Orders", icon: <ShoppingCart className={iconClass} strokeWidth={1.5} /> },
    { label: "Analytics", icon: <BarsIcon /> },
  ],
  [
    { label: "Inbox", icon: <Inbox className={iconClass} strokeWidth={1.5} /> },
    { label: "Calendar", icon: <Calendar className={iconClass} strokeWidth={1.5} /> },
    { label: "Team", icon: <Users className={iconClass} strokeWidth={1.5} /> },
    { label: "Requests", icon: <Inbox className={iconClass} strokeWidth={1.5} /> },
  ],
  [{ label: "Archive", icon: <Inbox className={iconClass} strokeWidth={1.5} /> }],
];

function Logo() {
  return (
    <svg className="h-8 w-8 shrink-0" viewBox="0 0 32 32">
      <defs>
        <linearGradient id="logoFill" x1="0" y1="0" x2="1" y2="1">
          <stop offset="0" stopColor="#d8598a" />
          <stop offset="0.350" stopColor="#cf3230" />
          <stop offset="1" stopColor="#6e1c18" />
        </linearGradient>
      </defs>
      <circle cx="8" cy="4" r="2.400" fill="#c8506a" />
      <circle cx="19" cy="4" r="3.200" fill="#bb3236" />
      <path d="M0 17C0 10 6 7.500 15 7.500C24 7.500 29.500 11 29.500 17C29.500 22 27 27 21 30C10 30 0 25 0 17Z" fill="url(#logoFill)" />
      <path d="M5.500 24.500L8.500 11.500L13.500 21L18.500 10C21.500 14 22.500 22 24 30M16.500 28.500L17.500 15" fill="none" stroke="#fff" strokeWidth="2" />
    </svg>
  );
}

function Sidebar() {
  return (
    <aside className="relative flex w-24 shrink-0 flex-col overflow-hidden border-r-2 border-gray-200 bg-[#fcfcfc]">
      <div className="flex items-center gap-[14px] pl-8 pt-9">
        <Logo />
        <span className="text-[28px] font-bold leading-8 text-gray-900">In</span>
      </div>
      <nav className="mt-[68px] flex flex-1 flex-col gap-24 text-gray-500" aria-label="Main">
        {NAV.map((group, i) => (
          <ul key={i} className="flex flex-col gap-2">
            {group.map((item) => (
              <li key={item.label}>
                <a href="#nav" aria-label={item.label} className="flex h-16 items-center pl-8">
                  {item.icon}
                </a>
              </li>
            ))}
          </ul>
        ))}
      </nav>
      <div className="h-[98px] border-t-2 border-gray-200 bg-gray-100 pl-8 pt-4">
        <div className="flex h-16 w-8 items-end justify-center rounded-full bg-[#d9dadd] pb-4 text-[32px] leading-8 text-gray-500">A</div>
      </div>
    </aside>
  );
}

const ROWS = [
  { coords: "21.7375, 76.6095", revenue: "₹5,909,650.41" },
  { coords: "18.7141, 76.6974", revenue: "₹5,555,210.623" },
  { coords: "20.5870, 77.9022", revenue: "₹5,186,927.162" },
  { coords: "18.2403, 76.6976", revenue: "₹4,895,485.822" },
  { coords: "21.7467, 77.8109", revenue: "₹4,631,876.764", selected: true },
  { coords: "19.1502, 76.8842", revenue: "₹4,297,832.446" },
  { coords: "21.2564, 76.2476", revenue: "₹3,656,107.558" },
];

const card = "rounded-2xl border-2 border-neutral-200 bg-white shadow-[0_2px_4px_rgba(0,0,0,0.05)]";
const cardTitle = "text-[46px] font-bold leading-[48px]";

export default function App() {
  return (
    <div className="flex min-h-screen bg-white font-['Liberation_Sans',Arial,sans-serif] text-[#0a0a0a]">
      <Sidebar />
      <main className="min-w-0 flex-1 pl-8">
        <div className="mx-auto flex max-w-[2560px] flex-col gap-12 px-8 py-16">
          <header className="flex items-center justify-between">
            <h1 className="flex items-center gap-4 text-[60px] font-bold leading-[72px]">
              <MapPin className="h-12 w-12" />
              Store Placement Recommendations
            </h1>
            <div className="flex gap-4 text-[28px]">
              <button type="button" className="flex h-[72px] items-center gap-8 rounded-xl border-2 border-neutral-200 px-6">
                <RefreshCw className="h-8 w-8" />
                Refresh
              </button>
              <button type="button" className="flex h-[72px] items-center gap-8 rounded-xl border-2 border-neutral-200 px-6">
                <Maximize2 className="h-8 w-8" />
                Fullscreen
              </button>
            </div>
          </header>

          <div className="grid grid-cols-2 gap-12">
            <section className={card}>
              <div className="flex items-center justify-between p-12">
                <h2 className={cardTitle}>Location Details</h2>
                <button type="button" className="flex h-[72px] items-center gap-8 px-6 text-[26px]">
                  <ChevronDown className="h-8 w-8" />
                  Sort by Revenue
                </button>
              </div>
              <table className="w-full text-left text-[28px]">
                <thead>
                  <tr className="h-24 border-b-2 border-neutral-200 text-neutral-500">
                    <th className="px-8 font-normal">Location</th>
                    <th className="px-8 font-normal">Estimated Revenue</th>
                  </tr>
                </thead>
                <tbody>
                  {ROWS.map((row) => (
                    <tr
                      key={row.coords}
                      className={
                        row.selected
                          ? "h-[110px] border-b-2 border-neutral-200 bg-neutral-100"
                          : "h-[110px] border-b-2 border-neutral-200 last:h-[108px] last:border-0"
                      }
                    >
                      <td className="px-8">
                        <div className="flex items-center gap-4">
                          <MapPin className="h-8 w-8 text-neutral-500" />
                          {row.coords}
                        </div>
                      </td>
                      <td className="px-8">
                        <span className="inline-flex h-11 items-center rounded-full bg-neutral-100 px-[22px] align-middle text-2xl font-bold text-neutral-900">
                          {row.revenue}
                        </span>
                      </td>
                    </tr>
                  ))}
                </tbody>
              </table>
            </section>

            <section className={card}>
              <h2 className={`p-12 ${cardTitle}`}>Store Placement Map</h2>
              <StoreMap />
            </section>
          </div>

          <section className={`p-12 ${card}`}>
            <h2 className={cardTitle}>Selected Location Details</h2>
            <dl className="mt-12 grid grid-cols-2 gap-8 text-[32px] leading-[48px]">
              <div>
                <dt className="text-neutral-500">Coordinates</dt>
                <dd className="font-bold">Latitude: 21.7467, Longitude: 77.8109</dd>
              </div>
              <div>
                <dt className="text-neutral-500">Estimated Revenue</dt>
                <dd className="flex">
                  <span className="flex h-[68px] items-center rounded-full bg-neutral-100 px-[22px] text-4xl font-bold text-neutral-900">
                    ₹4,631,876.764
                  </span>
                </dd>
              </div>
            </dl>
          </section>
        </div>
      </main>
      <button
        type="button"
        aria-label="Open developer tools"
        className="fixed bottom-8 left-8 h-[60px] w-[60px] rounded-full border-2 border-[#444] bg-[#1c1c1e] shadow-[0_16px_80px_rgba(0,0,0,0.2)]"
      >
        <svg className="h-14 w-14" viewBox="2 2 56 56" fill="none" stroke="#fff" strokeWidth="3">
          <path d="M30 16.500V26.500H40.500L30.500 43.500V33.500H19.500Z" />
        </svg>
      </button>
    </div>
  );
}
